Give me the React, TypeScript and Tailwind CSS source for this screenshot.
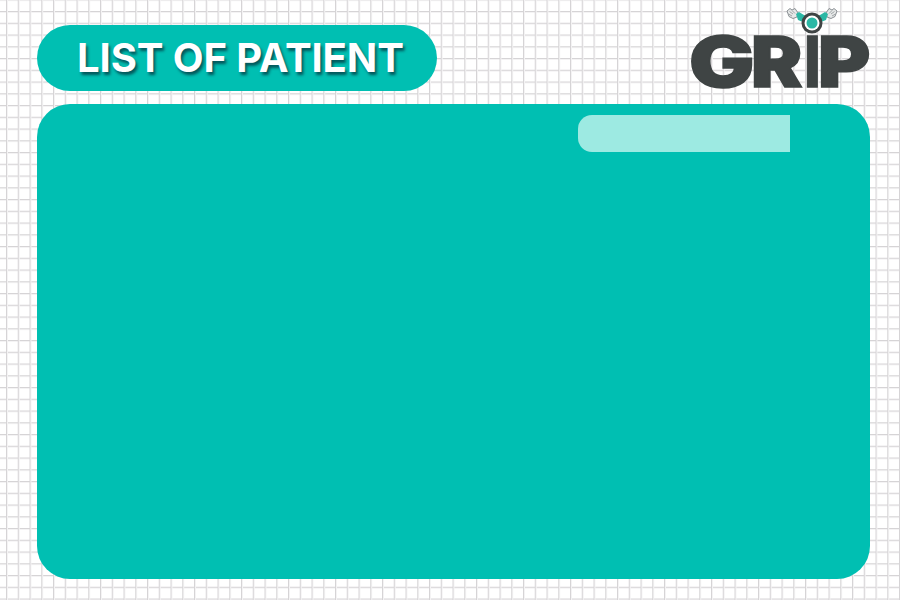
const letters = [
  { ch: "G", cls: "left-[-2px] scale-x-[1.24]" },
  { ch: "R", cls: "left-[60px] scale-x-[1.1]" },
  { ch: "I", cls: "left-[114px] scale-x-[0.72]" },
  { ch: "P", cls: "left-[127px] scale-x-[1.14]" },
];

function Arm({ flip }: { flip?: boolean }) {
  return (
    <g transform={flip ? "translate(54 0) scale(-1 1)" : undefined}>
      <path d="M2 4L5 1.500L7 3L10 1.500L13 6L12 10L8 11.500L4 9.500Z" fill="#e6e8e8" stroke="#80868a" strokeWidth="0.9" />
      <path d="M4.500 4.500L8 7M7 3.500L10 6.500M3.500 7L7 9" stroke="#80868a" strokeWidth="0.7" fill="none" />
      <path d="M11 7L14 5L23 10.500L20.500 16L13 13Z" fill="#2bb8a5" />
    </g>
  );
}

export default function App() {
  return (
    <div className="w-[900px] h-[600px] overflow-hidden bg-white bg-[linear-gradient(to_right,#d6d4d6_1px,#f4f3f4_1px,#f4f3f4_2px,transparent_2px),linear-gradient(to_bottom,#d6d4d6_1px,#f4f3f4_1px,#f4f3f4_2px,transparent_2px)] bg-[size:11.75px_11.75px] bg-[position:6px_0,0_11px] pt-[25px] pl-[37px] pr-[30px] flex flex-col gap-[13px]">
      <div className="flex justify-between items-start h-[66px]">
        <div className="w-[400px] h-[66px] rounded-[33px] bg-[#00bfb2] pl-[40px] flex items-center">
          <span className="font-['Inter',sans-serif] font-bold text-[40px] leading-none tracking-[-0.1px] text-white whitespace-nowrap [text-shadow:2px_3px_3px_#04565a]">LIST OF PATIENT</span>
        </div>
        <div className="relative w-[179px] h-[66px]">
          {letters.map((l) => (
            <span
              key={l.ch}
              className={`absolute top-[1px] origin-left font-['Inter',sans-serif] font-black text-[70px] leading-[72px] text-[#3f4444] [-webkit-text-stroke:1.5px_#3f4444] ${l.cls}`}
            >
              {l.ch}
            </span>
          ))}
          <svg className="absolute left-[94px] top-[-18px]" width="54" height="30" viewBox="0 0 54 30">
            <Arm />
            <Arm flip />
            <circle cx="27" cy="16" r="10.500" fill="#3f4444" />
            <circle cx="27" cy="16" r="7.500" fill="#fff" />
            <circle cx="27" cy="16" r="5.500" fill="#2bb8a5" />
          </svg>
        </div>
      </div>
      <div className="w-[833px] h-[475px] rounded-[33px] bg-[#00bfb2] pt-[11px] pl-[541px]">
        <div className="w-[212px] h-[37px] rounded-l-[14px] bg-[#9deae2]" />
      </div>
    </div>
  );
}
